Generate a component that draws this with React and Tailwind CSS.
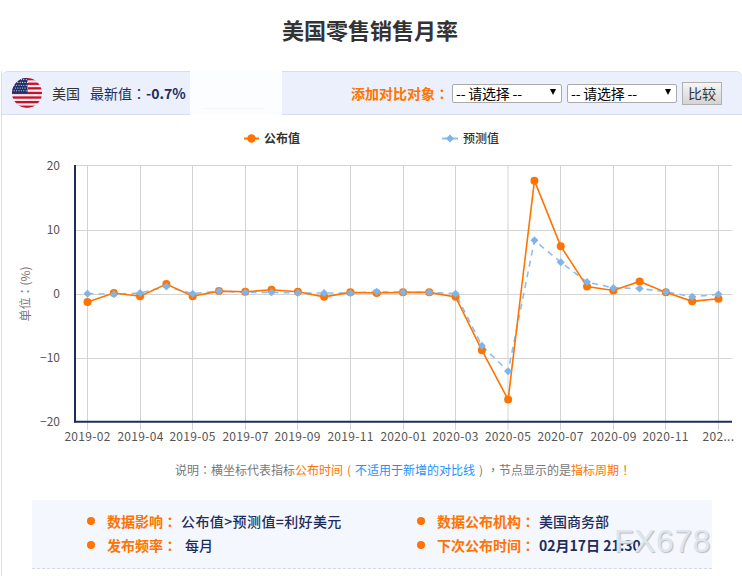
import React from "react";

const FONT = "font-['Noto_Sans_CJK_SC','Noto_Sans',sans-serif]";
const pub = [-1.2,0.2,-0.3,1.6,-0.3,0.5,0.4,0.7,0.4,-0.4,0.3,0.2,0.3,0.3,-0.4,-8.7,-16.4,17.7,7.5,1.2,0.6,2.0,0.3,-1.1,-0.7];
const est = [0.1,0,0.2,1.2,0.1,0.5,0.3,0.3,0.2,0.2,0.2,0.4,0.3,0.3,0.1,-8.0,-12,8.4,5,1.9,1.0,0.9,0.4,-0.4,0];
const X = (i) => 87.5 + i * 26.29;
const Y = (v) => 294.3 - v * 6.42;
const vLines = [87.5,140.5,192.5,245.5,297.5,350.5,403.5,455.5,508,560.5,613.5,665.5,718.5];
const xLabels = ["2019-02","2019-04","2019-05","2019-07","2019-09","2019-11","2020-01","2020-03","2020-05","2020-07","2020-09","2020-11","202..."];
const poly = (arr) => arr.map((v, i) => `${X(i)},${Y(v)}`).join(" ");
const diamond = (x, y, r) => `${x},${y - r} ${x + r},${y} ${x},${y + r} ${x - r},${y}`;

function P({ children }) {
  return <span className="font-['Noto_Sans_CJK_TC',sans-serif]">{children}</span>;
}

function Flag() {
  const stripes = [];
  for (let i = 0; i < 7; i++) stripes.push(<rect key={i} x="0" y={i * 4.6} width="30" height="2.3" fill="#c8102e" />);
  const dots = [];
  for (let r = 0; r < 5; r++) for (let c = 0; c < 6; c++) dots.push(<circle key={`${r}-${c}`} cx={2.2 + c * 2.4 + (r % 2) * 1.2} cy={1.6 + r * 2.8} r="0.55" fill="#ffffff" />);
  return (
    <svg width="30" height="30" viewBox="0 0 30 30" className="shrink-0">
      <defs><clipPath id="flagClip"><circle cx="15" cy="15" r="15" /></clipPath></defs>
      <g clipPath="url(#flagClip)">
        <rect width="30" height="30" fill="#f3eeee" />
        {stripes}
        <rect width="15.5" height="15.5" fill="#1f2f6b" />
        {dots}
      </g>
    </svg>
  );
}

function Chart() {
  const font = "'Noto Sans CJK SC','Noto Sans',sans-serif";
  return (
    <svg width="740" height="340" viewBox="2 115 740 340" className="block" fontFamily={font}>
      {/* legend */}
      <line x1="244" x2="259" y1="138.5" y2="138.5" stroke="#ff7300" strokeWidth="2" />
      <circle cx="251.5" cy="138.5" r="4.2" fill="#ff7300" />
      <text x="264" y="143" fontSize="12" fontWeight="700" fill="#333">公布值</text>
      <line x1="442" x2="458" y1="138.5" y2="138.5" stroke="#8ebdf0" strokeWidth="2" />
      <polygon points={diamond(450, 138.5, 4)} fill="#7eb4ea" />
      <text x="463" y="143" fontSize="12" fontWeight="500" fill="#333">预测值</text>

      {/* grid */}
      {[165.5, 230.5, 294.5, 358.5].map((y) => <line key={y} x1="75" x2="732" y1={y} y2={y} stroke="#d4d4d4" />)}
      {vLines.map((x) => <line key={x} x1={x} x2={x} y1="165" y2="430" stroke="#d2d3d6" />)}
      <line x1="75" x2="75" y1="165" y2="422.5" stroke="#1f2d5c" strokeWidth="2" />
      <line x1="74" x2="732" y1="421.7" y2="421.7" stroke="#1f2d5c" strokeWidth="2" />

      {/* y labels */}
      {[["20",165],["10",229],["0",293],["−10",357],["−20",421]].map(([t, y]) => (
        <text key={t} x="60" y={y + 4.5} textAnchor="end" fontSize="12" fill="#555">{t}</text>
      ))}
      <text transform="translate(30,294) rotate(-90)" textAnchor="middle" fontSize="12" fill="#8a7070">
        单位<tspan fontFamily="'Noto Sans CJK TC',sans-serif">：</tspan>(%)
      </text>

      {/* x labels */}
      {xLabels.map((t, i) => (
        <text key={t} x={vLines[i]} y="441" textAnchor="middle" fontSize="12" letterSpacing="0.3" fill="#555">{t}</text>
      ))}

      {/* series */}
      <polyline points={poly(est)} fill="none" stroke="#8ebdf0" strokeWidth="1.6" strokeDasharray="6 5" />
      <polyline points={poly(pub)} fill="none" stroke="#ff7300" strokeWidth="1.6" />
      {pub.map((v, i) => <circle key={i} cx={X(i)} cy={Y(v)} r="4" fill="#ff7300" />)}
      {est.map((v, i) => <polygon key={i} points={diamond(X(i), Y(v), 4)} fill="#7eb4ea" />)}
    </svg>
  );
}

function Select() {
  return (
    <span className="relative block w-[110px] h-[19px]">
      <select className={`block w-full h-full appearance-none bg-white border border-[#a9a9a9] rounded-[2px] pl-[3px] text-[14px] leading-[16px] tracking-[-0.2px] text-black ${FONT}`}>
        <option>-- 请选择 --</option>
      </select>
      <span className="absolute right-[6px] top-[5px] w-0 h-0 border-l-[3.5px] border-r-[3.5px] border-t-[6px] border-l-transparent border-r-transparent border-t-black pointer-events-none" />
    </span>
  );
}

function Item({ label, value, valueClass = "font-medium", gap = "ml-[4px]" }) {
  return (
    <div className="flex items-center h-[24px] text-[14px]">
      <span className="w-[8px] h-[8px] rounded-full bg-[#ff7300] shrink-0" />
      <span className="ml-[12px] text-[#ff7300] font-bold">{label}<P>：</P></span>
      <span className={`${gap} text-[#1f2d5c] ${valueClass}`}>{value}</span>
    </div>
  );
}

export default function App() {
  return (
    <div className={`relative w-[742px] h-[576px] overflow-hidden bg-white ${FONT}`}>
      <h1 className="h-[71px] pt-[13px] pr-[2px] text-center text-[22px] leading-[33px] font-bold text-[#333]">美国零售销售月率</h1>

      <div className="relative ml-px h-[505px] border-l border-[#d5dcf3]">
        <div className="relative h-[44px] flex items-center justify-between bg-[#ebf0fc] border-t border-b border-[#d5dcf3] rounded-tl-[6px] rounded-tr-[6px] pl-[10px] pr-[20px]">
          <div className="flex items-center">
            <Flag />
            <span className="ml-[10px] text-[14px] text-[#333]">美国</span>
            <span className="ml-[10px] text-[14px] text-[#1f2d5c]">最新值<P>：</P></span>
            <span className="text-[14px] font-bold text-[#1f2d5c]">-0.7%</span>
          </div>
          <div className="flex items-center">
            <span className="text-[14px] font-bold text-[#ff7300] mr-[3px]">添加对比对象<P>：</P></span>
            <Select />
            <span className="w-[5px]" />
            <Select />
            <button className={`ml-[5px] w-[40px] h-[23px] border border-[#b0b0b0] bg-gradient-to-b from-[#f6f6f6] to-[#d4d4d4] text-[14px] leading-[20px] text-[#333] ${FONT}`}>比较</button>
          </div>
          <div className="absolute left-[188px] -top-px w-[92px] h-[44px] bg-[#fcfdff]">
            <div className="mt-[37px] ml-[13px] w-[62px] h-px bg-[#f1f5fe]" />
          </div>
        </div>

        <Chart />

        <p className="ml-[173px] h-[45px] pt-[6px] text-[12px] leading-[18px] text-[#777] whitespace-nowrap">
          说明<P>：</P>横坐标代表指标<span className="text-[#ff7300]">公布时间<span className="inline-block w-[12px] text-center">(</span></span><span className="text-[#1e90ff]">不适用于新增的对比线</span><span className="inline-block w-[12px] text-center">)</span><P>，</P>节点显示的是<span className="text-[#ff7300]">指标周期<P>！</P></span>
        </p>

        <div className="ml-[30px] w-[680px] h-[69px] bg-[#f4f7fe] border-b border-dashed border-[#d5d8de] grid grid-cols-[330px_1fr] pl-[55px] pt-[9px] content-start">
          <Item label="数据影响" value="公布值>预测值=利好美元" valueClass="font-medium tracking-[0.4px]" />
          <Item label="数据公布机构" value="美国商务部" />
          <Item label="发布频率" value="每月" gap="ml-[8px]" />
          <Item label="下次公布时间" value="02月17日 21:30" valueClass="font-bold" />
        </div>
      </div>

      <span className="absolute left-[614px] top-[521px] text-[32px] leading-[40px] tracking-[0.5px] text-[#dde6f0] font-['Liberation_Sans',sans-serif] [text-shadow:1px_1px_1px_#bbbbbb] pointer-events-none">FX678</span>
    </div>
  );
}
